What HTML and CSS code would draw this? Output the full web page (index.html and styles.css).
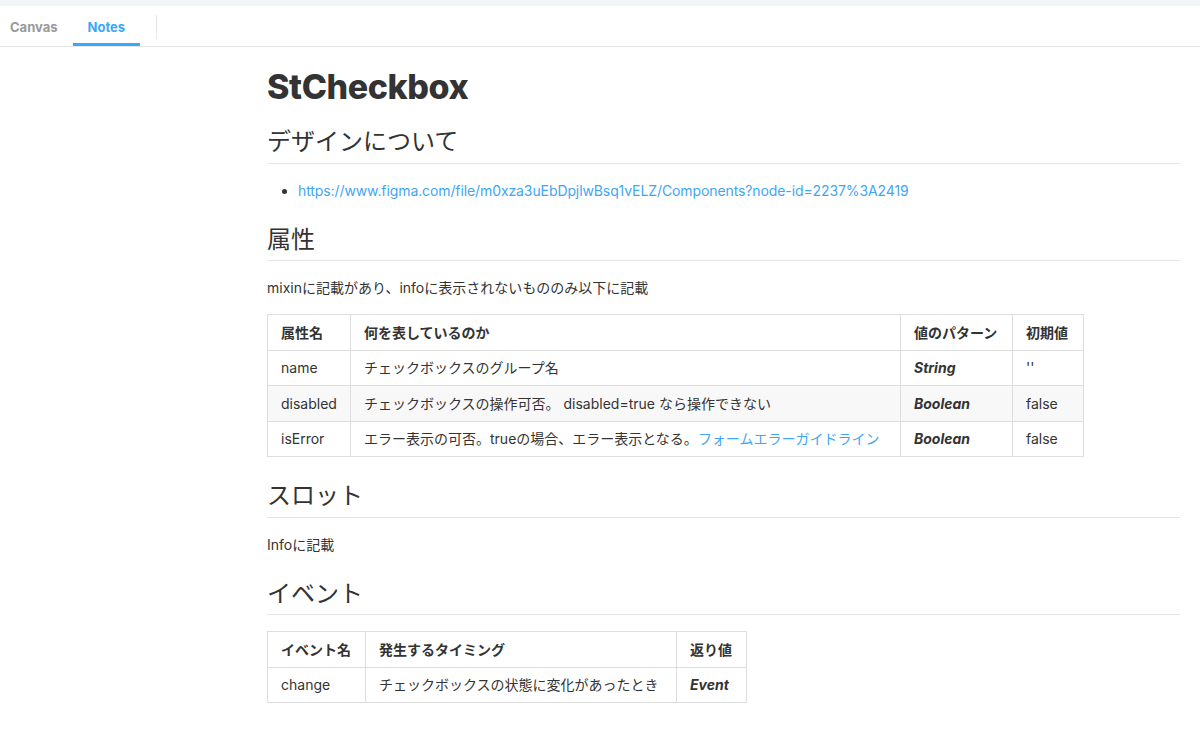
FILE: index.html
```html
<!DOCTYPE html>
<html lang="ja">
<head>
<meta charset="utf-8">
<title>StCheckbox</title>
<link rel="stylesheet" href="styles.css">
</head>
<body>
<div class="topstrip"></div>
<nav class="tabbar">
  <a class="tab tab-first">Canvas</a>
  <a class="tab tab-active">Notes</a>
  <span class="tab-sep"></span>
</nav>
<main class="notes">
  <h1>StCheckbox</h1>
  <h2>デザインについて</h2>
  <ul>
    <li><a class="link link-url" href="#">https://www.figma.com/file/m0xza3uEbDpjlwBsq1vELZ/Components?node-id=2237%3A2419</a></li>
  </ul>
  <h2>属性</h2>
  <p>mixinに記載があり、infoに表示されないもののみ以下に記載</p>
  <table class="tbl tbl-props">
    <thead>
      <tr>
        <th class="c-name">属性名</th>
        <th class="c-desc">何を表しているのか</th>
        <th class="c-type">値のパターン</th>
        <th class="c-def">初期値</th>
      </tr>
    </thead>
    <tbody>
      <tr>
        <td>name</td>
        <td>チェックボックスのグループ名</td>
        <td><em><strong>String</strong></em></td>
        <td>''</td>
      </tr>
      <tr>
        <td>disabled</td>
        <td>チェックボックスの操作可否。 disabled=true なら操作できない</td>
        <td><em><strong>Boolean</strong></em></td>
        <td>false</td>
      </tr>
      <tr>
        <td>isError</td>
        <td>エラー表示の可否。trueの場合、エラー表示となる。<a class="link" href="#">フォームエラーガイドライン</a></td>
        <td><em><strong>Boolean</strong></em></td>
        <td>false</td>
      </tr>
    </tbody>
  </table>
  <h2>スロット</h2>
  <p>Infoに記載</p>
  <h2>イベント</h2>
  <table class="tbl tbl-events">
    <thead>
      <tr>
        <th class="e-name">イベント名</th>
        <th class="e-desc">発生するタイミング</th>
        <th class="e-ret">返り値</th>
      </tr>
    </thead>
    <tbody>
      <tr>
        <td>change</td>
        <td>チェックボックスの状態に変化があったとき</td>
        <td><em><strong>Event</strong></em></td>
      </tr>
    </tbody>
  </table>
</main>
</body>
</html>
```
FILE: styles.css
```css
html, body {
  margin: 0;
  padding: 0;
  background: #ffffff;
}
body {
  font-family: Inter, "Noto Sans CJK JP", sans-serif;
  font-size: 14px;
  color: #333333;
  line-height: 1.5;
}
.topstrip {
  height: 6px;
  background: #f3f6f9;
}
.tabbar {
  display: flex;
  align-items: center;
  height: 40px;
  border-bottom: 1px solid #e6e6e6;
}
.tab {
  display: flex;
  align-items: center;
  height: 40px;
  box-sizing: border-box;
  padding: 6px 15px 0;
  font-size: 13px;
  font-weight: 700;
  color: #999999;
  border-bottom: 3px solid transparent;
}
.tab-first {
  padding-left: 10px;
}
.tab-active {
  color: #3aa8f5;
  border-bottom-color: #3aa8f5;
}
.tab-sep {
  width: 1px;
  height: 24px;
  background: #e6e6e6;
  margin-left: 16px;
  margin-top: 2px;
}
.notes {
  margin-left: 267px;
  width: 913px;
  padding-top: 1px;
}
h1 {
  font-size: 34px;
  font-weight: 800;
  line-height: 32px;
  margin: 23px 0 16px;
  letter-spacing: -0.4px;
}
h2 {
  font-size: 24px;
  font-weight: 400;
  line-height: 30px;
  margin: 24px 0 16px;
  padding-bottom: 5.5px;
  border-bottom: 1px solid #e6e6e6;
}
p {
  margin: 0 0 16px;
}
ul {
  margin: 0 0 16px;
  padding-left: 31px;
}
.link {
  color: #3fa6f5;
  text-decoration: none;
}
.link-url {
  letter-spacing: -0.1px;
}
.tbl {
  border-collapse: collapse;
  table-layout: fixed;
  margin: 0 0 16px;
}
.tbl th, .tbl td {
  box-sizing: border-box;
  border: 1px solid #dddddd;
  padding: 6.75px 13px;
  text-align: left;
  white-space: nowrap;
}
.tbl th {
  font-weight: 700;
}
.tbl tbody tr:nth-child(2) {
  background: #f8f8f8;
}
.tbl-props { width: 816px; }
.c-name { width: 83px; }
.c-desc { width: 550px; }
.c-type { width: 112px; }
.c-def { width: 71px; }
.tbl-events { width: 480px; }
.e-name { width: 98px; }
.e-desc { width: 311px; }
.e-ret { width: 70px; }
```
